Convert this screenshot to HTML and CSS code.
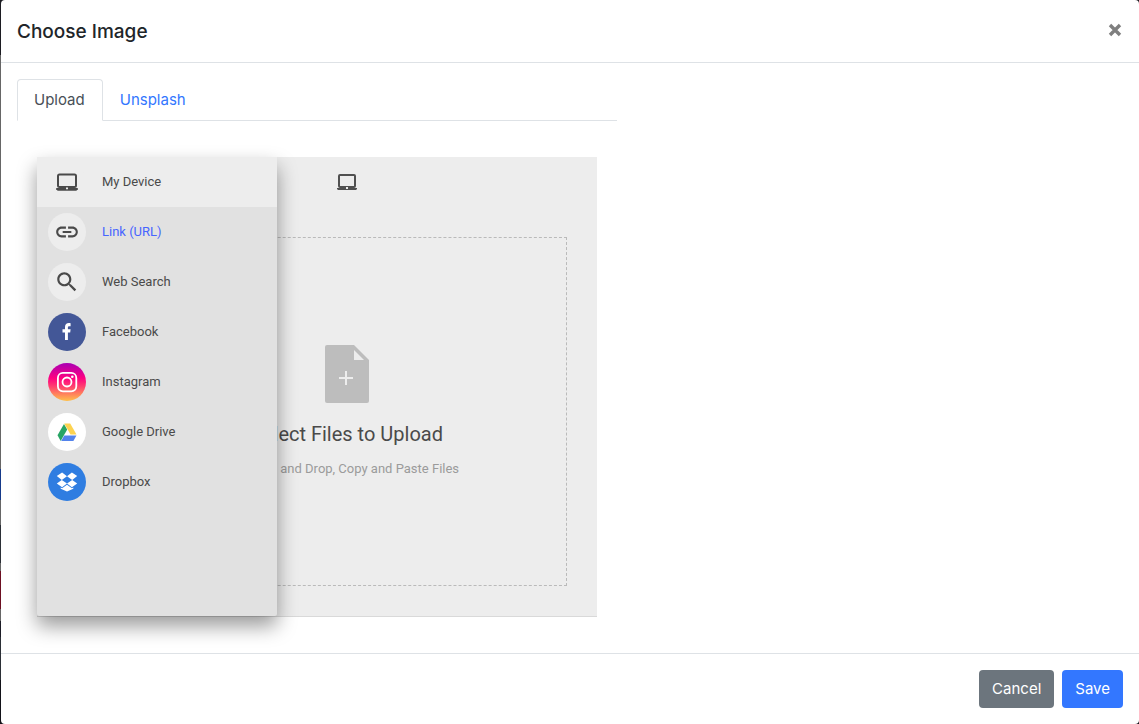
FILE: index.html
```html
<!DOCTYPE html>
<html lang="en">
<head>
<meta charset="utf-8">
<title>Choose Image</title>
<link rel="stylesheet" href="styles.css">
</head>
<body>
<div class="dialog" role="dialog" aria-labelledby="dialog-title">
  <header class="dialog-header">
    <h1 class="dialog-title" id="dialog-title">Choose Image</h1>
    <button class="close" type="button" aria-label="Close">
      <svg width="14" height="14" viewBox="0 0 14 14"><path d="M2 2l10 10M12 2L2 12" stroke="#7f7f7f" stroke-width="3.4" fill="none"/></svg>
    </button>
  </header>
  <main class="dialog-body">
    <nav class="tabs">
      <a class="tab tab-active" href="#upload">Upload</a>
      <a class="tab" href="#unsplash">Unsplash</a>
    </nav>
    <section class="widget" id="upload">
      <div class="stage">
        <div class="stage-bar">
          <svg class="laptop" width="20" height="20" viewBox="0 0 20 20"><rect x="2" y="3" width="16" height="12" rx="1" fill="none" stroke="#505050" stroke-width="2"/><path d="M0 16h20v1l-1 1H1l-1-1z" fill="#505050"/><path d="M9 15h2v2H9z" fill="#ededed"/></svg>
        </div>
        <div class="drop">
          <svg width="44" height="58" viewBox="0 0 44 58"><path d="M2 0h27l15 15v41a2 2 0 0 1-2 2H2a2 2 0 0 1-2-2V2a2 2 0 0 1 2-2z" fill="#bdbdbd"/><path d="M29 5v10h10z" fill="#ededed"/><path d="M14 33h14M21 26v14" stroke="#ededed" stroke-width="2"/></svg>
          <h2 class="drop-title">Select Files to Upload</h2>
          <p class="drop-hint">or Drag and Drop, Copy and Paste Files</p>
        </div>
      </div>
      <nav class="sources">
        <button class="source source-active" type="button">
          <span class="badge"><svg width="22" height="22" viewBox="0 0 22 22"><rect x="2" y="3.600" width="18" height="12.400" rx="1.500" fill="none" stroke="#4a4a4a" stroke-width="2"/><path d="M.2 17h21.600v1.200l-1.500 1.500H1.700L.2 18.200z" fill="#4a4a4a"/><path d="M10 16.500h2v1.800h-2z" fill="#ededed"/></svg></span>
          My Device
        </button>
        <button class="source source-link" type="button">
          <span class="badge"><svg width="26" height="26" viewBox="0 0 24 24"><path fill="#4a4a4a" d="M3.900 12c0-1.710 1.390-3.100 3.100-3.100h4V7H7c-2.760 0-5 2.240-5 5s2.240 5 5 5h4v-1.900H7c-1.710 0-3.100-1.390-3.100-3.100zM8 13h8v-2H8v2zm9-6h-4v1.900h4c1.710 0 3.100 1.390 3.100 3.100s-1.390 3.100-3.100 3.100h-4V17h4c2.760 0 5-2.240 5-5s-2.240-5-5-5z"/></svg></span>
          Link (URL)
        </button>
        <button class="source" type="button">
          <span class="badge"><svg width="26" height="26" viewBox="0 0 24 24"><path fill="#4a4a4a" d="M15.500 14h-.790l-.280-.270C15.410 12.590 16 11.110 16 9.500 16 5.910 13.090 3 9.500 3S3 5.910 3 9.500 5.910 16 9.500 16c1.610 0 3.090-.590 4.230-1.570l.270.280v.790l5 4.990L20.490 19l-4.990-5zm-6 0C7.010 14 5 11.990 5 9.500S7.010 5 9.500 5 14 7.010 14 9.500 11.990 14 9.500 14z"/></svg></span>
          Web Search
        </button>
        <button class="source" type="button">
          <span class="badge badge-facebook"><svg width="38" height="38" viewBox="0 0 38 38"><path fill="#fff" d="M17 27v-7.500h-2.500v-3.200H17v-2.200c0-2.700 1.500-4 3.900-4 .7 0 1.300.1 1.700.2v2.900h-1.300c-1.200 0-1.400.6-1.400 1.400v1.700h2.700l-.4 3.200h-2.300V27z"/></svg></span>
          Facebook
        </button>
        <button class="source" type="button">
          <span class="badge badge-instagram"><svg width="38" height="38" viewBox="0 0 38 38"><g fill="none" stroke="#fff" stroke-width="1.800"><rect x="9.900" y="9.900" width="18.400" height="18.400" rx="5"/><circle cx="19" cy="19" r="4.500"/></g><circle cx="24.300" cy="13.800" r="1.300" fill="#fff"/></svg></span>
          Instagram
        </button>
        <button class="source" type="button">
          <span class="badge badge-drive"><svg width="38" height="38" viewBox="0 0 38 38"><path fill="#27a565" d="M16 11l3.200 5.500L12.700 28 9.500 22.300z"/><path fill="#fdd351" d="M16.200 10.500h6l6.300 11h-6z"/><path fill="#5383ec" d="M16.300 22.400h12.200L25.400 28H13.200z"/></svg></span>
          Google Drive
        </button>
        <button class="source" type="button">
          <span class="badge badge-dropbox"><svg width="38" height="38" viewBox="0 0 38 38"><path fill="#fff" d="M14.100 9.500l4.900 3.800-5.200 3.600-5-3.800zM23.900 9.500L19 13.300l5.200 3.600 5-3.800zM8.800 20.600l5-3.700 5.200 3.700-4.900 3.700zM29.200 20.600l-5-3.700-5.200 3.700 4.900 3.700zM19 21.700l4.900 3.600 1.400-.9v1.300L19 28.500l-6.300-2.800v-1.300l1.400.9z"/></svg></span>
          Dropbox
        </button>
      </nav>
    </section>
  </main>
  <footer class="dialog-footer">
    <button class="btn btn-cancel" type="button">Cancel</button>
    <button class="btn btn-save" type="button">Save</button>
  </footer>
</div>
</body>
</html>
```
FILE: styles.css
```css
* {
  box-sizing: border-box;
}

body {
  margin: 0;
  padding-left: 1px;
  min-height: 100vh;
  display: flex;
  font-family: Inter, "Liberation Sans", sans-serif;
  font-size: 15px;
  line-height: 24px;
  color: #212529;
  background: linear-gradient(#1c1c22 0 55px, #666 55px 469px, #163a8a 469px 500px, #666 500px 525px, #2b2f36 525px 563px, #666 563px 571px, #6d0f22 571px 609px, #666 609px 621px, #1c1c26 621px 637px, #2b2f36 637px 680px, #121218 680px);
}

.dialog {
  flex: 1;
  display: flex;
  flex-direction: column;
  background: #fff;
  border-radius: 4px;
}

.dialog-header {
  display: flex;
  align-items: center;
  justify-content: space-between;
  padding: 16px;
  border-bottom: 1px solid #dee2e6;
}

.dialog-title {
  margin: 0;
  padding-top: 2px;
  font-size: 19px;
  font-weight: 500;
  line-height: 28px;
}

.close {
  display: flex;
  padding: 0 1px 2px;
  border: 0;
  background: none;
}

.dialog-body {
  flex: 1;
  padding: 16px 16px 36px;
}

.tabs {
  display: flex;
  max-width: 600px;
  border-bottom: 1px solid #dee2e6;
}

.tab {
  margin-bottom: -1px;
  padding: 8px 17px 8px 16px;
  border: 1px solid transparent;
  border-radius: 4px 4px 0 0;
  color: #3377ff;
  text-decoration: none;
}

.tab-active {
  color: #495057;
  background: #fff;
  border-color: #dee2e6 #dee2e6 #fff;
}

.widget {
  position: relative;
  display: flex;
  max-width: 560px;
  height: 460px;
  margin: 36px 20px 0;
  padding-left: 60px;
  background: #ededed;
  border-bottom: 1px solid #d9d9d9;
  font-family: Roboto, sans-serif;
}

.stage {
  flex: 1;
  display: flex;
  flex-direction: column;
  padding: 0 30px 30px;
}

.stage-bar {
  display: flex;
  justify-content: center;
  height: 80px;
  padding-top: 15px;
}

.drop {
  flex: 1;
  display: flex;
  flex-direction: column;
  align-items: center;
  justify-content: center;
  border: 1px dashed #bababa;
}

.drop-title {
  margin: 16px 0 10px;
  font-size: 20px;
  font-weight: 400;
  line-height: 30px;
  color: #4a4a4a;
}

.drop-hint {
  margin: 0;
  font-size: 13px;
  line-height: 20px;
  color: #9b9b9b;
}

.sources {
  position: absolute;
  top: 0;
  left: 0;
  bottom: 0;
  width: 240px;
  background: #e1e1e1;
  border-radius: 2px;
  box-shadow: 0 10px 20px rgba(0, 0, 0, 0.4);
}

.source {
  display: flex;
  align-items: center;
  gap: 16px;
  width: 100%;
  height: 50px;
  padding: 0 11px;
  border: 0;
  background: none;
  font: 13px/20px Roboto, sans-serif;
  color: #4a4a4a;
  text-align: left;
}

.source-active {
  background: #ededed;
}

.source-link {
  color: #4765ff;
}

.badge {
  display: flex;
  align-items: center;
  justify-content: center;
  width: 38px;
  height: 38px;
  border-radius: 50%;
  background: #ededed;
}

.badge-facebook {
  background: #435797;
}

.badge-instagram {
  background: linear-gradient(#a800b4, #ff0080 40%, #ff3a70 60%, #ffc04a);
}

.badge-drive {
  background: #fff;
}

.badge-dropbox {
  background: #2f7de1;
}

.dialog-footer {
  display: flex;
  justify-content: flex-end;
  gap: 8px;
  padding: 16px;
  border-top: 1px solid #dee2e6;
}

.btn {
  padding: 7px 13px;
  border: 0;
  border-radius: 4px;
  font: 15px/24px Inter, "Liberation Sans", sans-serif;
  color: #fff;
}

.btn-cancel {
  background: #6c757d;
}

.btn-save {
  background: #3377ff;
}
```
